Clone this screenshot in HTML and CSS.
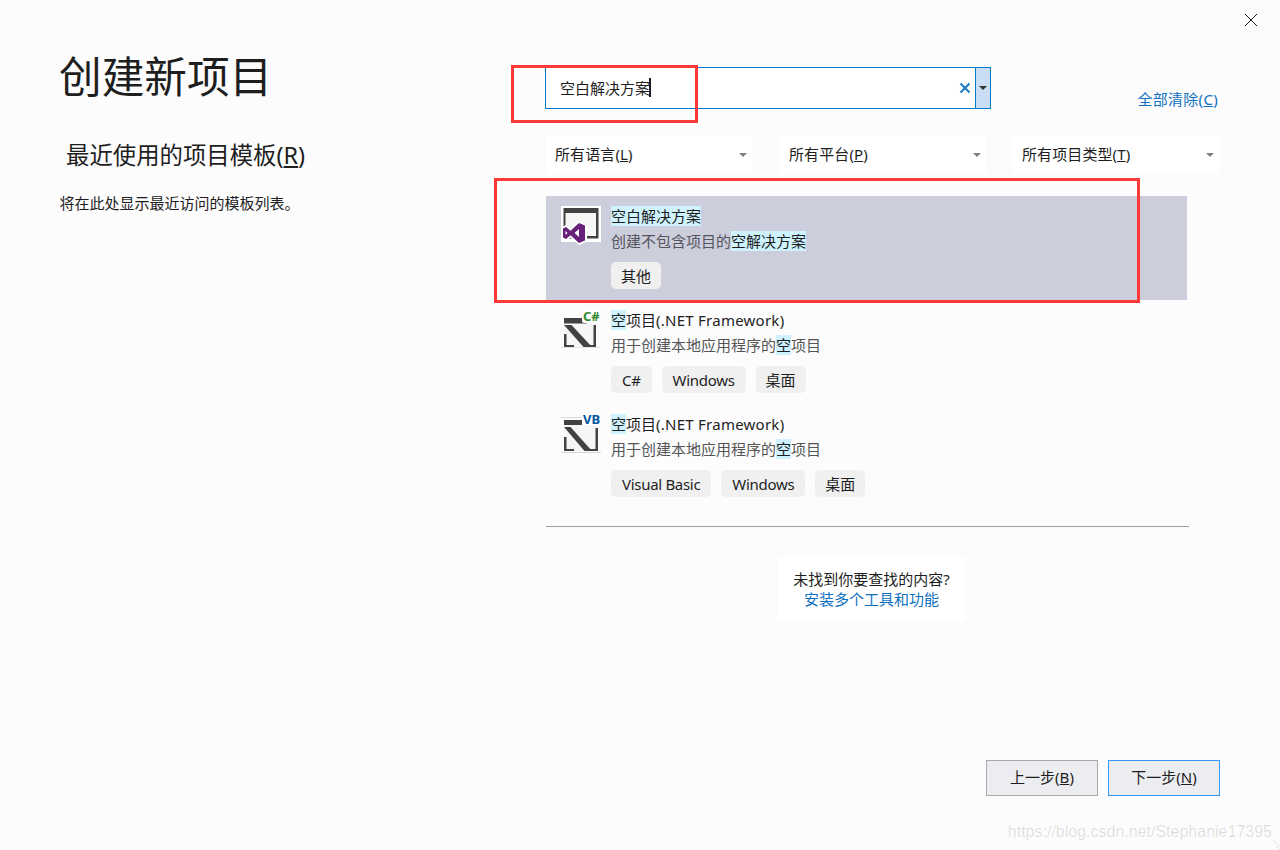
FILE: index.html
```html
<!DOCTYPE html>
<html lang="zh-CN">
<head>
<meta charset="utf-8">
<title>创建新项目</title>
<link rel="stylesheet" href="styles.css">
</head>
<body>
<div class="page">
  <aside class="left">
    <h1 class="title">创建新项目</h1>
    <h2 class="recent">最近使用的项目模板(<u>R</u>)</h2>
    <p class="recent-note">将在此处显示最近访问的模板列表。</p>
  </aside>

  <main class="main">
    <div class="search-row">
      <div class="search">
        <div class="search-field">
          <span class="search-text">空白解决方案</span><span class="caret"></span>
          <svg class="search-clear" width="12" height="12" viewBox="0 0 12 12"><path d="M1.5 1.5l9 9M10.5 1.5l-9 9"/></svg>
        </div>
        <div class="search-drop"><span class="arrow arrow-dark"></span></div>
      </div>
      <a class="clear-all">全部清除(<u>C</u>)</a>
    </div>

    <div class="filters">
      <div class="filter"><span class="filter-label">所有语言(<u>L</u>)</span><span class="arrow"></span></div>
      <div class="filter"><span class="filter-label">所有平台(<u>P</u>)</span><span class="arrow"></span></div>
      <div class="filter"><span class="filter-label">所有项目类型(<u>T</u>)</span><span class="arrow"></span></div>
    </div>

    <ul class="results">
      <li class="result result-selected">
        <svg class="result-icon" width="44" height="44" viewBox="0 0 44 44">
          <rect x="1" y="2" width="40" height="36" fill="#fff"/>
          <rect x="3.5" y="4" width="35" height="30.5" fill="#424242"/>
          <rect x="5.5" y="9" width="30.5" height="23" fill="#f6f6f6"/>
          <path d="M19 17 L27 20.5 V37.5 L19 41 L10.5 33.5 L6 37 L1 34.5 V23.5 L6 21 L10.5 24.5 Z" fill="#fff"/>
          <path fill="#68217a" fill-rule="evenodd" d="M19 19 L25 21.5 V36.5 L19 39 L10.5 31.3 L6 35 L3 33.5 V24.5 L6 23 L10.5 26.7 Z M19 25 L14.5 29 L19 33 Z M5.5 27 V31 L7.5 29 Z"/>
        </svg>
        <div class="result-body">
          <div class="result-title"><mark>空白解决方案</mark></div>
          <div class="result-desc">创建不包含项目的<mark>空解决方案</mark></div>
          <div class="tags"><span class="tag tag-cjk">其他</span></div>
        </div>
      </li>
      <li class="result">
        <svg class="result-icon result-icon-badged" width="44" height="48" viewBox="0 -4 44 48">
          <rect x="1" y="39" width="40" height="1" fill="#e4e4e4"/>
          <path d="M4 10H36V39H4Z" fill="#f6f6f6"/>
          <path d="M4 10H24L27 15.5H4Z" fill="#424242"/>
          <path d="M4 17H11.5L32 39H23.5Z" fill="#424242"/>
          <path d="M4 26H6.5V37H14V39H4ZM33.5 17H36V39H28V37H33.5Z" fill="#424242"/>
          <rect x="22" y="2" width="18" height="13" rx="2" fill="#fff"/>
          <text class="badge badge-cs" x="23" y="13">C#</text>
        </svg>
        <div class="result-body">
          <div class="result-title"><mark>空</mark>项目<span class="latin">(.NET Framework)</span></div>
          <div class="result-desc">用于创建本地应用程序的<mark>空</mark>项目</div>
          <div class="tags"><span class="tag">C#</span><span class="tag">Windows</span><span class="tag tag-cjk">桌面</span></div>
        </div>
      </li>
      <li class="result">
        <svg class="result-icon result-icon-badged" width="44" height="48" viewBox="0 -4 44 48">
          <rect x="1" y="40" width="40" height="1" fill="#d8d8d8"/>
          <rect x="1" y="5" width="22" height="1" fill="#d8d8d8"/>
          <path d="M4 8H38V39H4Z" fill="#f6f6f6"/>
          <path d="M4 8H24L26 13H4Z" fill="#424242"/>
          <path d="M4 15H10.5L32 39H24.5Z" fill="#424242"/>
          <path d="M4 25H6.5V37H14V39H4ZM35.5 16H38V39H29V37H35.5Z" fill="#424242"/>
          <rect x="22" y="1" width="18" height="12" fill="#fff"/>
          <text class="badge badge-vb" x="23" y="12">VB</text>
        </svg>
        <div class="result-body">
          <div class="result-title"><mark>空</mark>项目<span class="latin">(.NET Framework)</span></div>
          <div class="result-desc">用于创建本地应用程序的<mark>空</mark>项目</div>
          <div class="tags"><span class="tag">Visual Basic</span><span class="tag">Windows</span><span class="tag tag-cjk">桌面</span></div>
        </div>
      </li>
    </ul>

    <hr class="divider">

    <div class="not-found">
      <div>未找到你要查找的内容?</div>
      <a class="install-link">安装多个工具和功能</a>
    </div>

    <footer class="actions">
      <button class="btn"><span class="btn-label">上一步(<u>B</u>)</span></button>
      <button class="btn btn-primary"><span class="btn-label">下一步(<u>N</u>)</span></button>
    </footer>
  </main>

  <div class="window-controls">
    <svg class="close" width="14" height="14" viewBox="0 0 14 14"><path d="M1 1l12 12M13 1L1 13"/></svg>
  </div>

  <div class="annotation annotation-search"></div>
  <div class="annotation annotation-result"></div>
  <div class="watermark">https://blog.csdn.net/Stephanie17395</div>
  <svg class="grip" width="6" height="10" viewBox="0 0 6 10"><path d="M0 1l6 6M3 7l3 3"/></svg>
</div>
</body>
</html>
```

FILE: styles.css
```css
* { box-sizing: border-box; }

html, body {
  margin: 0;
  padding: 0;
}

body {
  background: #fcfcfd;
  color: #1e1e1e;
  font-family: "Noto Sans", "Noto Sans CJK SC", sans-serif;
  font-size: 15px;
}

.page {
  position: relative;
  display: grid;
  grid-template-columns: 546px 674px 60px;
  width: 1280px;
  height: 850px;
  overflow: hidden;
}

/* left column */
.left { padding: 50px 0 0 60px; }

.title {
  margin: 0 0 0 -1px;
  font-size: 42.67px;
  font-weight: 400;
  line-height: 54px;
}

.recent {
  margin: 34px 0 0;
  padding-left: 6px;
  font-size: 23.4px;
  font-weight: 400;
  line-height: 34px;
}

.recent-note {
  margin: 20px 0 0 -0.5px;
  line-height: 22px;
}

/* main column */
.main {
  display: flex;
  flex-direction: column;
  padding: 67px 0 54px;
}

.search-row {
  display: flex;
  align-items: flex-start;
  height: 42px;
}

.search {
  display: flex;
  width: 446px;
  height: 42px;
  margin-left: -1px;
  border: 1px solid #007acc;
  background: #fff;
}

.search-field {
  flex: 1;
  display: flex;
  align-items: center;
  padding-left: 14px;
}

.search-text { margin-bottom: 2px; }

.caret {
  width: 2px;
  height: 19px;
  margin-left: -1px;
  margin-bottom: 1px;
  background: #1e1e1e;
}

.search-clear {
  margin-left: auto;
  margin-right: 4px;
}

.search-clear path {
  fill: none;
  stroke: #1e7ac4;
  stroke-width: 2;
}

.search-drop {
  display: flex;
  align-items: center;
  justify-content: center;
  width: 15px;
  border-left: 1px solid #007acc;
  background: #c9def5;
}

.arrow {
  width: 0;
  height: 0;
  border-left: 4px solid transparent;
  border-right: 4px solid transparent;
  border-top: 4px solid #808080;
}

.arrow-dark { border-top-color: #333; }

.clear-all {
  margin: 21px 2px 0 auto;
  color: #0e70c0;
  letter-spacing: 0.3px;
  line-height: 22px;
}

.filters {
  display: flex;
  margin-top: 26px;
}

.filter {
  display: flex;
  align-items: center;
  justify-content: space-between;
  width: 206px;
  height: 39px;
  padding: 0 5px 0 9px;
  background: #fff;
}

.filter:nth-child(2) { margin: 0 27px 0 28px; }

.filter-label {
  margin-bottom: 2px;
  letter-spacing: 0.1px;
}

.results {
  width: 641px;
  margin: 22px 0 0;
  padding: 0;
  list-style: none;
}

.result {
  display: flex;
  gap: 7px;
  height: 104px;
  padding: 8px 0 0 14px;
}

.result-selected { background: #cccedb; }

.result-icon { flex: none; }

.result-icon-badged { margin-top: -4px; }

.badge {
  font-family: "Noto Sans", sans-serif;
  font-size: 13px;
  font-weight: 700;
}

.badge-cs { fill: #388a34; }
.badge-vb { fill: #00539c; }

.result-title {
  line-height: 24px;
}

.latin { letter-spacing: 0.25px; }

.result-desc {
  padding-top: 1px;
  color: #555;
  line-height: 25px;
}

.result-selected .result-desc { color: #555560; }

mark {
  background: #cef3ff;
  color: #1e1e1e;
}

.tags {
  display: flex;
  gap: 10px;
  margin-top: 8px;
}

.tag {
  height: 27px;
  padding: 1px 11px 0;
  border-radius: 5px;
  background: #f0f0f0;
  letter-spacing: -0.3px;
  line-height: 26px;
}

.tag-cjk {
  padding: 1px 10px 0;
  letter-spacing: 0;
}

.divider {
  width: 643px;
  height: 1px;
  margin: 18px 0 0;
  border: 0;
  background: #a0a0a0;
}

.not-found {
  width: 187px;
  margin: 30px 0 0 232px;
  padding: 12px 0;
  background: #fff;
  line-height: 20px;
  text-align: center;
}

.install-link { color: #0e70c0; }

.actions {
  display: flex;
  justify-content: flex-end;
  gap: 10px;
  margin-top: auto;
}

.btn {
  width: 112px;
  height: 36px;
  padding: 0 0 3px;
  border: 1px solid #a9a9a9;
  background: #ecedf1;
  color: #1e1e1e;
  font: inherit;
}

.btn-primary { border-color: #3399ff; }

/* window controls */
.window-controls { padding: 13px 0 0 24px; }

.close { display: block; }

.close path {
  fill: none;
  stroke: #1e1e1e;
  stroke-width: 1;
}

/* overlays */
.annotation {
  position: absolute;
  border: 3px solid #ff3838;
}

.annotation-search {
  left: 511px;
  top: 65px;
  width: 187px;
  height: 58px;
}

.annotation-result {
  left: 494px;
  top: 178px;
  width: 646px;
  height: 125px;
}

.watermark {
  position: absolute;
  right: 8px;
  bottom: 8px;
  color: rgba(0, 0, 0, 0.13);
  font-family: "Liberation Sans", Arial, sans-serif;
  font-size: 16px;
  line-height: 20px;
}

.grip {
  position: absolute;
  right: 0;
  bottom: 0;
}

.grip path {
  fill: none;
  stroke: #c8c8c8;
  stroke-dasharray: 1.5 1.5;
}
```
